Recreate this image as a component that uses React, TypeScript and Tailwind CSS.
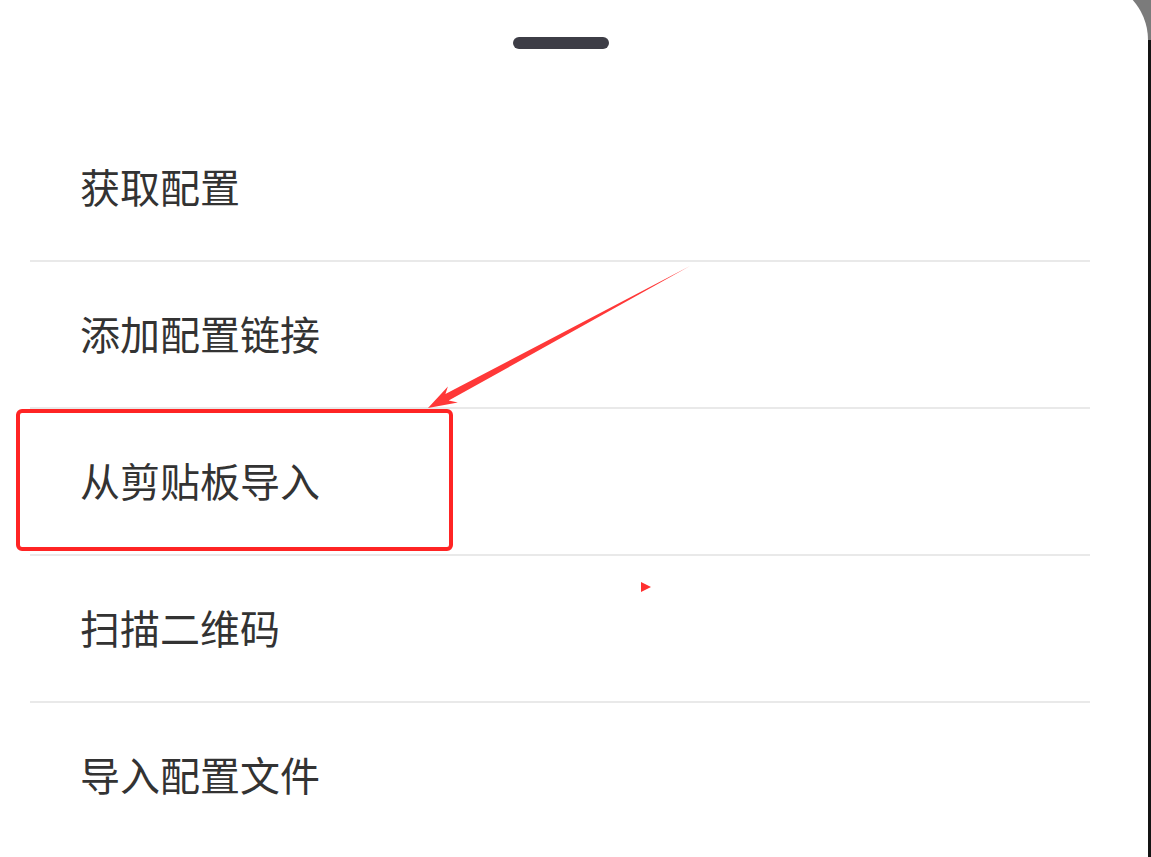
const items = ['获取配置', '添加配置链接', '从剪贴板导入', '扫描二维码', '导入配置文件'];

export default function App() {
  return (
    <div
      className="relative w-[1151px] h-[857px] overflow-hidden bg-[#141414]"
      style={{ fontFamily: "'Noto Sans CJK SC', 'Noto Sans', sans-serif" }}
    >
      {/* dimmed screen peeking out behind the sheet corner */}
      <div className="absolute top-0 right-0 w-[40px] h-[40px] bg-[#7b7b7b]" />

      {/* bottom sheet */}
      <div className="relative -mt-[20px] w-[1148px] h-[877px] bg-white rounded-tr-[60px] pt-[20px]">
        {/* drag handle */}
        <div className="flex justify-center pr-[27px] pt-[37px]">
          <div className="w-[96px] h-[12px] rounded-full bg-[#3d3d46]" />
        </div>

        <div className="mt-[66px] flex flex-col">
          {items.map((label, i) => (
            <div key={label} className="flex flex-col">
              <div className="h-[145px] flex items-center pl-[80px] pb-[3px] text-[40px] text-[#333333] leading-none">
                {label}
              </div>
              {i < items.length - 1 && <div className="ml-[30px] mr-[58px] h-[2px] bg-[#e9e9e9]" />}
            </div>
          ))}
        </div>
      </div>

      {/* highlight box */}
      <div className="absolute left-[16px] top-[409px] w-[437px] h-[142px] border-4 border-[#ff2424] rounded-[6px]" />

      {/* pointer arrow + stray marker */}
      <svg className="absolute inset-0 pointer-events-none" width="1151" height="857" viewBox="0 0 1151 857">
        <polygon
          points="690,266 445.4,394.0 447.9,386.5 428,408 457.8,402.5 448.7,400.6"
          fill="#ff3838"
        />
        <polygon points="641,582 651,587 641,592" fill="#ff3030" />
      </svg>
    </div>
  );
}
